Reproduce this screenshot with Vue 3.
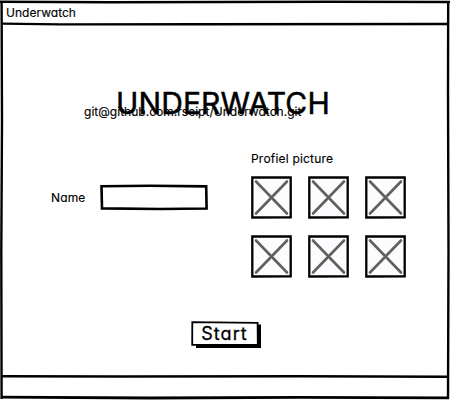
<script setup>
const pictures = [1, 2, 3, 4, 5, 6]
</script>

<template>
  <main class="window">
    <svg class="outline" viewBox="0 0 450 400" aria-hidden="true">
      <g fill="none" stroke="#000" stroke-width="2.4">
        <path d="M0 1.8 L110 2.3 L330 1.8 L450 2" />
        <path d="M1.6 1 L2 120 L1.3 250 L1.6 399" />
        <path d="M448.2 1 L448 90 L448.5 250 L448 399" />
        <path d="M2 23.6 L60 24.4 L200 24.2 L448 24" />
        <path d="M2 376.3 L120 376.5 L300 376.3 L448 376.7" />
        <path d="M1 397.2 L150 398 L300 397.4 L449 397.8" stroke-width="2.8" />
      </g>
    </svg>
    <header class="titlebar">Underwatch</header>
    <section class="content">
      <div class="heading">
        <h1>UNDERWATCH</h1>
        <p class="repo">git@github.com:rseipt/Underwatch.git</p>
      </div>
      <div class="form">
        <label class="name">
          <span class="label">Name</span>
          <svg class="field" viewBox="0 0 108 27">
            <path d="M1.5 2.2 L50 1.8 L106.2 2.4 L106.6 24.5 L60 25 L2 24.4 Z" fill="#fff" stroke="#000" stroke-width="2.6" />
          </svg>
        </label>
        <div class="profile">
          <div class="caption">Profiel picture</div>
          <div class="grid">
            <svg v-for="p in pictures" :key="p" viewBox="0 0 42 43">
              <path d="M1.3 1.3 L39.7 1.5 L39.7 41.3 L1.3 41.5 Z" fill="#fcfcfe" stroke="#000" stroke-width="2.3" />
              <path d="M5 5.5 L36 37.5 M36 5.5 L5 37.5" stroke="#606060" stroke-width="2.6" stroke-linecap="round" />
            </svg>
          </div>
        </div>
      </div>
      <button class="start">
        <svg viewBox="0 0 71 28" aria-hidden="true">
          <path d="M67 3.5 H70 V27 H5 V24 H67 Z" />
          <path d="M1.3 1.2 L66.6 1.8 L66.8 23.8 L1.2 23.8 Z" fill="#fff" stroke="#000" stroke-width="1.8" />
        </svg>
        <span>Start</span>
      </button>
    </section>
    <footer></footer>
  </main>
</template>

<style>
body { margin: 0; background: #fff; }
</style>

<style scoped>
.window {
  position: relative;
  width: 450px;
  height: 400px;
  display: grid;
  grid-template-rows: 25px 351px 24px;
  font-family: Inter, "Open Sans", sans-serif;
  font-feature-settings: "cv11";
  font-size: 12px;
  line-height: 16px;
  color: #000;
  overflow: hidden;
}
svg { display: block; }
.outline { position: absolute; inset: 0; width: 450px; height: 400px; pointer-events: none; }
.titlebar { padding: 5px 0 0 6px; letter-spacing: 0.03px; -webkit-text-stroke: 0.15px #000; }
.content { display: flex; flex-direction: column; align-items: flex-start; padding-top: 59px; }
.heading { position: relative; height: 67px; padding-left: 116px; }
h1 {
  margin: 0;
  font-size: 30px;
  line-height: 39px;
  font-weight: 400;
  letter-spacing: 0.12px;
  white-space: nowrap;
  -webkit-text-stroke: 0.5px #000;
}
.repo { position: absolute; left: 84px; top: 20px; margin: 0; white-space: nowrap; letter-spacing: 0.02px; -webkit-text-stroke: 0.15px #000; }
.form { display: flex; gap: 43px; padding-left: 51px; height: 127px; }
.name { display: flex; align-items: flex-start; width: 157px; padding-top: 33px; }
.label { width: 49px; padding-top: 6px; letter-spacing: 0.15px; -webkit-text-stroke: 0.15px #000; }
.field { width: 108px; height: 27px; }
.caption { height: 25px; white-space: nowrap; letter-spacing: 0.2px; -webkit-text-stroke: 0.15px #000; }
.grid { display: grid; grid-template-columns: repeat(3, 42px); column-gap: 15px; row-gap: 16px; }
.grid svg { width: 42px; height: 43px; }
.start {
  position: relative;
  width: 71px;
  height: 28px;
  margin: 43px 0 0 191px;
  padding: 0 4px 3px 0;
  border: 0;
  background: none;
  color: inherit;
  font: inherit;
  font-feature-settings: inherit;
  font-size: 18px;
  line-height: 25px;
  letter-spacing: 1.1px;
  -webkit-text-stroke: 0.3px #000;
}
.start svg { position: absolute; inset: 0; width: 71px; height: 28px; }
.start span { position: relative; }
</style>
